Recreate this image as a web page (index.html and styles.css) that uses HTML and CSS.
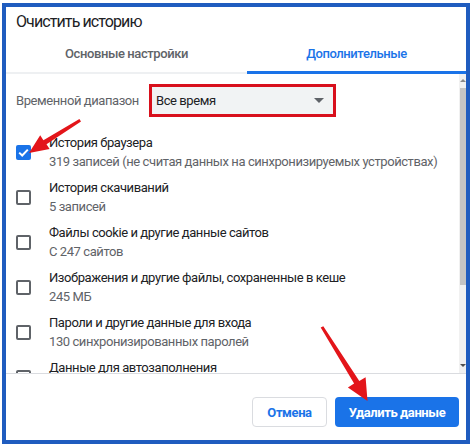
FILE: index.html
```html
<!DOCTYPE html>
<html lang="ru">
<head>
<meta charset="utf-8">
<title>Очистить историю</title>
<link rel="stylesheet" href="styles.css">
</head>
<body>
  <div class="frame">
    <div class="title">Очистить историю</div>

    <ul class="tabs">
      <li class="tab">Основные настройки</li>
      <li class="tab selected">Дополнительные</li>
    </ul>

    <div class="content">
      <div class="list">
        <div class="range">
          <span class="range-label">Временной диапазон</span>
          <div class="select">
            <span>Все время</span>
            <span class="caret"></span>
          </div>
        </div>

        <div class="item">
          <span class="box checked">
            <svg viewBox="0 0 15 15" width="15" height="15"><path d="M3.2 7.6 L6.2 10.5 L11.8 4.6" fill="none" stroke="#fff" stroke-width="2"/></svg>
          </span>
          <div class="texts">
            <div class="name">История браузера</div>
            <div class="note">319 записей (не считая данных на синхронизируемых устройствах)</div>
          </div>
        </div>
        <div class="item">
          <span class="box"></span>
          <div class="texts">
            <div class="name">История скачиваний</div>
            <div class="note">5 записей</div>
          </div>
        </div>
        <div class="item">
          <span class="box"></span>
          <div class="texts">
            <div class="name">Файлы cookie и другие данные сайтов</div>
            <div class="note">С 247 сайтов</div>
          </div>
        </div>
        <div class="item">
          <span class="box"></span>
          <div class="texts">
            <div class="name">Изображения и другие файлы, сохраненные в кеше</div>
            <div class="note">245 МБ</div>
          </div>
        </div>
        <div class="item">
          <span class="box"></span>
          <div class="texts">
            <div class="name">Пароли и другие данные для входа</div>
            <div class="note">130 синхронизированных паролей</div>
          </div>
        </div>
        <div class="item last">
          <span class="box"></span>
          <div class="texts">
            <div class="name">Данные для автозаполнения</div>
          </div>
        </div>
      </div>

      <div class="scrollbar">
        <span class="sb-up"></span>
        <span class="sb-thumb"></span>
        <span class="sb-space"></span>
        <span class="sb-down"></span>
      </div>
    </div>

    <div class="footer">
      <button class="btn cancel">Отмена</button>
      <button class="btn primary">Удалить данные</button>
    </div>
  </div>

  <!-- red annotation arrows drawn over the dialog -->
  <svg class="marks" width="474" height="448" viewBox="0 0 474 448">
    <polygon fill="#e3151a" points="79.4,118.9 43.4,140.2 40.2,135.2 29,153 49.6,148.9 46.5,144.3 81,121.6"/>
    <polygon fill="#e3151a" points="320.7,327.5 354.1,383.6 347.9,387.6 367.5,401 365.6,377.2 359.3,381.1 323.3,326.2"/>
  </svg>
</body>
</html>
```

FILE: styles.css
```css
body
{
	margin: 0;
	background: #fff;
	font-family: Roboto, "Liberation Sans", Arial, sans-serif;
	color: #202124;
	letter-spacing: -0.42px;
}
.frame
{
	box-sizing: border-box;
	width: 468px;
	height: 441px;
	margin: 3px 4px 4px 2px;
	border: 4px solid #1f5cbf;
	background: #fff;
	display: flex;
	flex-direction: column;
}
.title
{
	font-size: 16px;
	line-height: 20px;
	letter-spacing: -0.9px;
	padding: 5px 10px 0;
}
.tabs
{
	list-style: none;
	margin: 4px 0 0;
	padding: 0;
	display: flex;
}
.tab
{
	box-sizing: border-box;
	height: 38px;
	line-height: 36px;
	text-align: center;
	font-size: 13px;
	font-weight: 500;
	color: #5f6368;
	width: 241px;
	border-bottom: 2px solid #eef0f2;
}
.tab.selected
{
	width: 219px;
	color: #1a73e8;
	border-bottom: 3px solid #1a73e8;
	line-height: 35px;
}
.content
{
	height: 299px;
	display: flex;
	overflow: hidden;
}
.list
{
	flex: 1;
	padding-left: 10px;
	overflow: hidden;
}
.range
{
	display: flex;
	align-items: center;
	margin-top: 10px;
	margin-bottom: 16px;
}
.range-label
{
	width: 133px;
	font-size: 13px;
	color: #5f6368;
}
.select
{
	box-sizing: border-box;
	width: 187px;
	height: 33px;
	border: 3px solid #d8101c;
	background: #f1f3f4;
	display: flex;
	align-items: center;
	justify-content: space-between;
	padding: 0 9px 0 4px;
	font-size: 13px;
}
.caret
{
	width: 0;
	height: 0;
	border-left: 5px solid transparent;
	border-right: 5px solid transparent;
	border-top: 5px solid #5f6368;
}
.item
{
	display: flex;
	height: 45px;
}
.item.last .name
{
	line-height: 14px;
	padding-top: 3px;
}
.box
{
	box-sizing: border-box;
	flex: none;
	width: 15px;
	height: 15px;
	margin: 12px 18px 0 0;
	border: 2px solid #5f6368;
	border-radius: 2px;
}
.box.checked
{
	border: 0;
	background: #1a73e8;
}
.box svg
{
	display: block;
}
.name
{
	font-size: 13px;
	line-height: 20px;
}
.note
{
	font-size: 13px;
	line-height: 18px;
	color: #5f6368;
	white-space: nowrap;
}
.scrollbar
{
	width: 7px;
	background: #f1f1f1;
	display: flex;
	flex-direction: column;
	align-items: center;
}
.sb-up, .sb-down
{
	width: 0;
	height: 0;
	border-left: 3px solid transparent;
	border-right: 3px solid transparent;
}
.sb-up
{
	margin-top: 5px;
	border-bottom: 3px solid #8a8a8a;
}
.sb-thumb
{
	margin-top: 6px;
	width: 6px;
	height: 197px;
	background: #c4c4c4;
}
.sb-space
{
	flex: 1;
}
.sb-down
{
	margin-bottom: 6px;
	border-top: 3px solid #505050;
}
.footer
{
	flex: 1;
	border-top: 1px solid #dadce0;
	display: flex;
	justify-content: flex-end;
	align-items: flex-start;
	gap: 8px;
	padding: 23px 7px 0 0;
}
.btn
{
	height: 30px;
	border-radius: 4px;
	font-family: Roboto, "Liberation Sans", Arial, sans-serif;
	font-size: 13px;
	font-weight: 700;
	letter-spacing: -0.42px;
	cursor: pointer;
}
.cancel
{
	width: 75px;
	background: #fff;
	color: #1a73e8;
	border: 1px solid #dadce0;
}
.primary
{
	width: 124px;
	background: #1a73e8;
	color: #fff;
	border: 0;
}
.marks
{
	position: absolute;
	left: 0;
	top: 0;
	pointer-events: none;
}
```
